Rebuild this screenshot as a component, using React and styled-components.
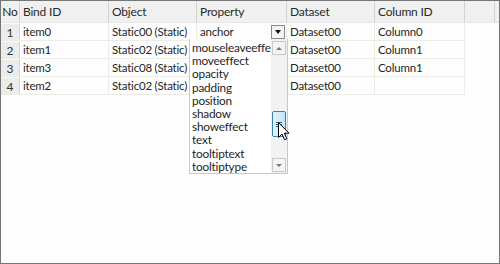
import React from 'react'
import styled, { createGlobalStyle } from 'styled-components'

const GlobalStyle = createGlobalStyle`
  html, body { margin: 0; padding: 0; background: #fff; }
  body { font-family: Lato, "Noto Sans", sans-serif; }
`

const columns = [
  { key: 'bind', title: 'Bind ID', width: 89 },
  { key: 'object', title: 'Object', width: 88 },
  { key: 'property', title: 'Property', width: 90 },
  { key: 'dataset', title: 'Dataset', width: 88 },
  { key: 'column', title: 'Column ID', width: 90 },
]

const rows = [
  { no: 1, bind: 'item0', object: 'Static00 (Static)', property: 'anchor', dataset: 'Dataset00', column: 'Column0' },
  { no: 2, bind: 'item1', object: 'Static02 (Static)', property: '', dataset: 'Dataset00', column: 'Column1' },
  { no: 3, bind: 'item3', object: 'Static08 (Static)', property: '', dataset: 'Dataset00', column: 'Column1' },
  { no: 4, bind: 'item2', object: 'Static02 (Static)', property: '', dataset: 'Dataset00', column: '' },
]

const options = [
  'mouseleaveeffect',
  'moveeffect',
  'opacity',
  'padding',
  'position',
  'shadow',
  'showeffect',
  'text',
  'tooltiptext',
  'tooltiptype',
]

const Cursor = () => (
  <svg width="12" height="19" viewBox="0 0 12 19">
    <path d="M0.5 0.5 L0.5 15.5 L4 12 L6.5 17.8 L8.8 16.8 L6.3 11.2 L11 11.2 Z" fill="#fff" stroke="#000" strokeWidth="1" strokeLinejoin="round" />
  </svg>
)

const App = () => {
  return (
    <>
      <GlobalStyle />
      <Window>
        <HeaderRow>
          <HeadCell width={19}>No</HeadCell>
          {columns.map((c) => (
            <HeadCell key={c.key} width={c.width} left>{c.title}</HeadCell>
          ))}
          <HeadFiller />
        </HeaderRow>

        {rows.map((r) => (
          <Row key={r.no}>
            <NoCell>{r.no}</NoCell>
            {columns.map((c) => (
              <Cell key={c.key} width={c.width}>
                {c.key === 'property' && r.property ? (
                  <Combo>
                    <span>{r.property}</span>
                    <ComboButton>
                      <ArrowDown />
                    </ComboButton>
                  </Combo>
                ) : (
                  r[c.key]
                )}
              </Cell>
            ))}
          </Row>
        ))}

        <Popup>
          <OptionList>
            {options.map((o) => (
              <Option key={o}>{o}</Option>
            ))}
          </OptionList>
          <ScrollBar>
            <ScrollButton>
              <SmallArrow up />
            </ScrollButton>
            <Track>
              <Thumb>
                <Grip />
                <Grip />
                <Grip />
              </Thumb>
            </Track>
            <ScrollButton>
              <SmallArrow />
            </ScrollButton>
          </ScrollBar>
        </Popup>

        <Pointer>
          <Cursor />
        </Pointer>
      </Window>
    </>
  )
}

export default App

const Window = styled.div`
  position: relative;
  width: 500px;
  height: 264px;
  box-sizing: border-box;
  border: 1px solid #767676;
  background: #fefefe;
  font-size: 11.5px;
  letter-spacing: -0.2px;
  color: #262626;
  overflow: hidden;
`

const HeaderRow = styled.div`
  display: flex;
  height: 21px;
  background: #f0f0f0;
  border-bottom: 1px solid #e6e6e6;
`

const HeadCell = styled.div`
  width: ${(p) => p.width}px;
  flex: none;
  box-sizing: border-box;
  display: flex;
  align-items: center;
  justify-content: ${(p) => (p.left ? 'flex-start' : 'center')};
  padding-left: ${(p) => (p.left ? '3px' : '0')};
  border-right: 1px solid #d2d2d2;
  color: #2a2a2a;
  font-size: 12px;
  white-space: nowrap;
`

const HeadFiller = styled.div`
  flex: 1;
  border-right: 1px solid #d2d2d2;
  margin-right: 4px;
`

const Row = styled.div`
  display: flex;
  width: 464px;
  height: 18px;
  box-sizing: border-box;
  border-bottom: 1px solid #ecece6;
`

const NoCell = styled.div`
  width: 19px;
  flex: none;
  box-sizing: border-box;
  display: flex;
  align-items: center;
  justify-content: center;
  background: #ececec;
  border-right: 1px solid #d6d6d6;
  border-top: 1px solid #fafafa;
  color: #333;
  font-size: 12px;
`

const Cell = styled.div`
  width: ${(p) => p.width}px;
  flex: none;
  box-sizing: border-box;
  display: flex;
  align-items: center;
  padding-left: 3px;
  border-right: 1px solid #ecece6;
  white-space: nowrap;
  overflow: hidden;
`

const Combo = styled.div`
  flex: 1;
  display: flex;
  align-items: center;
  justify-content: space-between;
  padding-right: 1px;
`

const ComboButton = styled.div`
  width: 14px;
  height: 14px;
  box-sizing: border-box;
  border: 1px solid #8a8a8a;
  background: #f3f3f3;
  display: flex;
  align-items: center;
  justify-content: center;
`

const ArrowDown = styled.div`
  width: 0;
  height: 0;
  border-left: 3.5px solid transparent;
  border-right: 3.5px solid transparent;
  border-top: 4px solid #111;
`

const Popup = styled.div`
  position: absolute;
  left: 188px;
  top: 38px;
  width: 99px;
  height: 135px;
  box-sizing: border-box;
  border: 1px solid #c8c8c8;
  border-top: none;
  background: #fff;
  display: flex;
`

const OptionList = styled.div`
  flex: 1;
  overflow: hidden;
  padding-top: 2px;
`

const Option = styled.div`
  height: 13.2px;
  line-height: 13.2px;
  padding-left: 2px;
  white-space: nowrap;
  color: #1e1e1e;
  font-size: 11.8px;
`

const ScrollBar = styled.div`
  width: 16px;
  flex: none;
  display: flex;
  flex-direction: column;
  background: #f2f2f2;
  padding: 2px 1px 1px 1px;
  box-sizing: border-box;
`

const ScrollButton = styled.div`
  height: 14px;
  box-sizing: border-box;
  border: 1px solid #c9c9c9;
  background: #f4f4f4;
  display: flex;
  align-items: center;
  justify-content: center;
`

const SmallArrow = styled.div`
  width: 0;
  height: 0;
  border-left: 3px solid transparent;
  border-right: 3px solid transparent;
  ${(p) => (p.up ? 'border-bottom: 3px solid #777;' : 'border-top: 3px solid #777;')}
`

const Track = styled.div`
  flex: 1;
  padding-top: 56px;
`

const Thumb = styled.div`
  height: 26px;
  box-sizing: border-box;
  border: 1px solid #3c7fb1;
  border-radius: 2px;
  background: linear-gradient(to right, #e3f4fc, #bee6fd);
  display: flex;
  flex-direction: column;
  align-items: center;
  justify-content: center;
  gap: 1px;
`

const Grip = styled.div`
  width: 6px;
  height: 1px;
  background: #2c628b;
`

const Pointer = styled.div`
  position: absolute;
  left: 277px;
  top: 121px;
  line-height: 0;
`
